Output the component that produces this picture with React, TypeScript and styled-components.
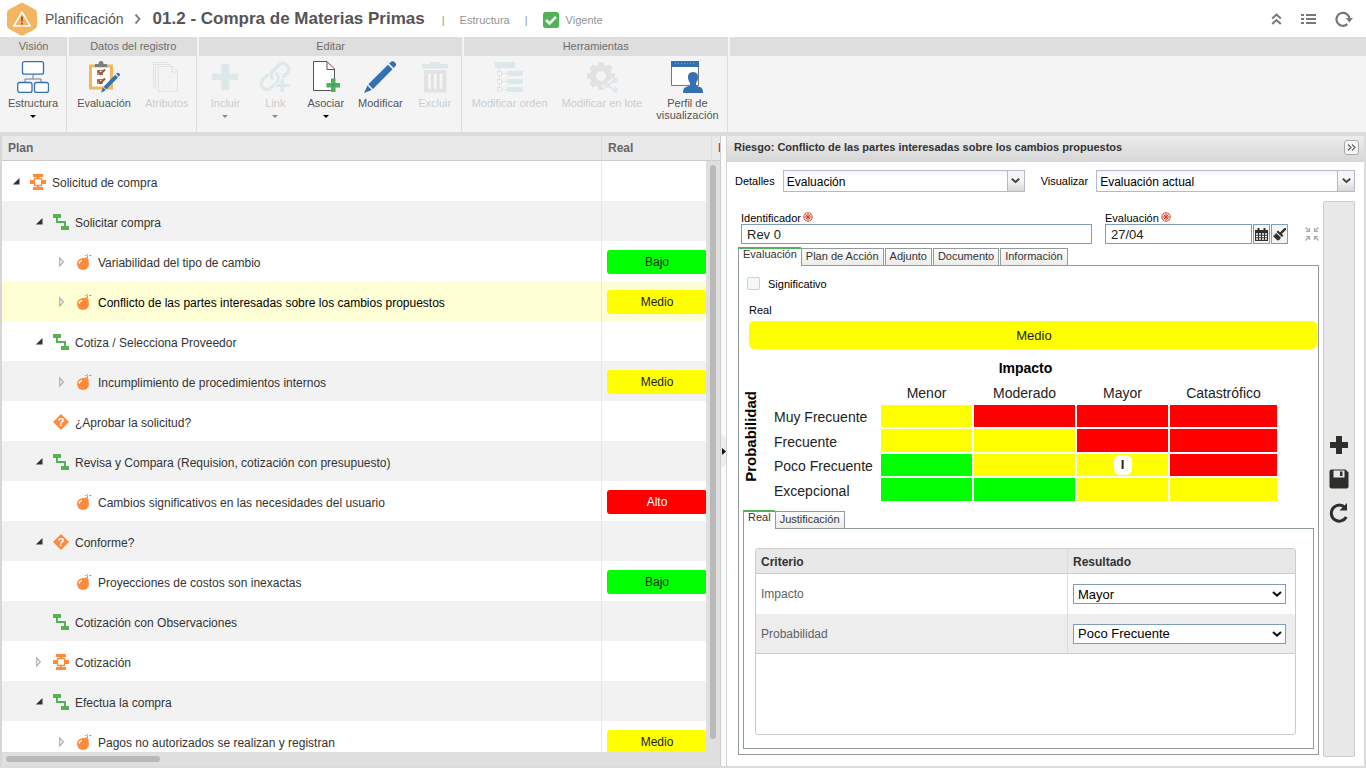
import React, { ReactNode } from 'react';
import styled, { createGlobalStyle, css } from 'styled-components';

const GlobalStyle = createGlobalStyle`
  *, *::before, *::after { box-sizing: border-box; }
  body {
    margin: 0;
    font-family: "Liberation Sans", Arial, sans-serif;
    font-size: 12px;
    color: #333;
    background: #fff;
  }
  button, input, select { font-family: inherit; margin: 0; }
  button { padding: 0; border: 0; background: none; color: inherit; }
  svg { display: block; flex: none; }
`;

const BLUE = '#3470b2';
const ORANGE = '#ff8a3c';
const GREEN = '#57b257';
const PALE = '#dce8ea';
const PALE_GREY = '#e2e2e2';

/* ---------- page ---------- */

const Page = styled.div`
  display: flex;
  flex-direction: column;
  height: 100vh;
  overflow: hidden;
`;

const TopBar = styled.header`
  display: flex;
  align-items: center;
  height: 37px;
  padding: 0 13px 0 6px;
  flex: none;
`;

const Crumb = styled.a`
  margin-left: 7px;
  font-size: 14px;
  color: #555;
  text-decoration: none;
`;

const Title = styled.h1`
  margin: 0 0 0 12px;
  font-size: 17px;
  line-height: 20px;
  color: #555558;
  white-space: nowrap;
`;

const Meta = styled.div`
  display: flex;
  align-items: center;
  gap: 15px;
  margin-left: 17px;
  padding-top: 2px;
  font-size: 11px;
  color: #939696;
`;

const Status = styled.span`
  display: flex;
  align-items: center;
  gap: 7px;
`;

const TopActions = styled.div`
  display: flex;
  align-items: center;
  gap: 19px;
  margin-left: auto;
`;

/* ---------- ribbon ---------- */

const Ribbon = styled.nav`
  display: flex;
  gap: 2px;
  flex: none;
  height: 99px;
  background: #f4f4f4;
  border-bottom: 4px solid #dcdcdc;
`;

const Group = styled.section<{ $fill?: boolean }>`
  display: flex;
  flex-direction: column;
  flex: ${(p) => (p.$fill ? '1' : 'none')};
`;

const GroupTitle = styled.h2`
  margin: 0;
  height: 19px;
  font-size: 11px;
  line-height: 19px;
  font-weight: normal;
  text-align: center;
  color: #6c6c6c;
  background: #dedede;
`;

const GroupBody = styled.div`
  display: flex;
  flex: 1;
  padding: 5px 1px 0;
  border-right: 1px solid #dedede;
`;

const Tool = styled.button`
  display: flex;
  flex-direction: column;
  align-items: center;
  min-width: 50px;
  padding: 0 7px;
  font-size: 11px;
  line-height: 12px;
  white-space: pre-line;
  color: #555;
  &:disabled { color: #cdcdcd; }
`;

const ToolLabel = styled.span`
  margin-top: 4px;
`;

const Caret = styled.span<{ $dim?: boolean }>`
  margin-top: 6px;
  border: 3px solid transparent;
  border-top-color: ${(p) => (p.$dim ? '#8a8a8a' : '#000')};
  border-bottom: 0;
`;

/* ---------- workspace ---------- */

const Workspace = styled.main`
  display: grid;
  grid-template-columns: minmax(0, 721fr) 5px minmax(0, 640fr);
  flex: 1;
  min-height: 0;
  border-bottom: 2px solid #dcdcdc;
`;

const TreePane = styled.section`
  display: flex;
  flex-direction: column;
  min-width: 0;
  min-height: 0;
  border-left: 2px solid #d6d6d6;
  border-right: 1px solid #ccc;
`;

const TreeView = styled.div`
  position: relative;
  flex: 1;
  min-height: 0;
  overflow: hidden;
`;

const TreeTable = styled.table`
  width: 100%;
  table-layout: fixed;
  border-collapse: separate;
  border-spacing: 0;
`;

const TreeHead = styled.th`
  height: 25px;
  padding: 0 6px;
  overflow: hidden;
  white-space: nowrap;
  font-size: 12px;
  text-align: left;
  color: #666;
  background: #e9e9e9;
  border-right: 1px solid #dcdcdc;
  border-bottom: 1px solid #ccc;
  &:last-child { border-right: 0; }
`;

const TreeRow = styled.tr<{ $selected?: boolean }>`
  height: 40px;
  background: #fff;
  &:nth-child(even) { background: #f2f2f2; }
  ${(p) =>
    p.$selected &&
    css`
      && { background: #ffffd5; color: #000; }
    `}
`;

const TreeCell = styled.td`
  height: 40px;
  padding: 0;
  border-right: 1px solid #e6e6e6;
`;

const BadgeCell = styled.td`
  height: 40px;
  padding: 2px 5px 0;
`;

const Node = styled.div<{ $level: number }>`
  display: flex;
  align-items: center;
  height: 40px;
  padding-left: ${(p) => 10 + p.$level * 23}px;
  padding-top: 2px;
  white-space: nowrap;
`;

const NodeText = styled.span`
  padding-top: 2px;
`;

const Toggle = styled.button`
  width: 10px;
  height: 16px;
  margin-right: 8px;
`;

const NodeIcon = styled.span`
  width: 16px;
  height: 16px;
  margin-right: 6px;
`;

const levelColors: Record<string, string> = { Bajo: '#0f0', Medio: '#ff0', Alto: '#f00' };

const Badge = styled.div<{ $level: string }>`
  width: 100px;
  height: 24px;
  line-height: 24px;
  border-radius: 3px;
  text-align: center;
  color: ${(p) => (p.$level === 'Alto' ? '#fff' : '#222')};
  background: ${(p) => levelColors[p.$level]};
`;

const VScroll = styled.div`
  position: absolute;
  top: 25px;
  right: 0;
  bottom: 0;
  width: 14px;
  padding: 4px 4px 13px;
  background: #dfdfdf;
`;

const HScroll = styled.div`
  flex: none;
  height: 14px;
  padding: 4px;
  background: #dfdfdf;
`;

const Thumb = styled.div<{ $width: string; $height: string }>`
  width: ${(p) => p.$width};
  height: ${(p) => p.$height};
  border-radius: 3px;
  background: #b9b9b9;
`;

const Splitter = styled.div`
  display: flex;
  align-items: center;
  justify-content: flex-end;
  background: #fafafa;
`;

const SplitHandle = styled.button`
  display: flex;
  align-items: center;
  justify-content: flex-end;
  width: 5px;
  height: 35px;
  background: #ededed;
  clip-path: polygon(0 0, 100% 4px, 100% 31px, 0 100%);
`;

/* ---------- detail pane ---------- */

const DetailPane = styled.section`
  display: flex;
  flex-direction: column;
  min-width: 0;
  min-height: 0;
  border-left: 1px solid #d2d2d2;
  border-right: 2px solid #dcdcdc;
`;

const DetailHead = styled.header`
  display: flex;
  align-items: center;
  justify-content: space-between;
  flex: none;
  height: 26px;
  padding: 0 5px 4px 7px;
  background: linear-gradient(#ececec, #d6d6d6);
`;

const DetailTitle = styled.h2`
  margin: 0;
  font-size: 11px;
  color: #333;
  white-space: nowrap;
`;

const CollapseButton = styled.button`
  display: flex;
  align-items: center;
  justify-content: center;
  width: 15px;
  height: 15px;
  border: 1px solid #aaa;
  border-radius: 3px;
  background: #f6f6f6;
`;

const Filters = styled.div`
  display: flex;
  align-items: center;
  flex: none;
  padding: 8px 9px 9px 8px;
  font-size: 11px;
  color: #000;
`;

const FilterLabel = styled.label`
  margin-right: 8px;
`;

const Combo = styled.span<{ $grow: number }>`
  position: relative;
  display: flex;
  flex: ${(p) => p.$grow} 1 0;
  margin-right: 16px;
  &:last-child { margin-right: 0; }
`;

const ComboSelect = styled.select`
  appearance: none;
  width: 100%;
  height: 22px;
  padding: 1px 20px 0 3px;
  font-size: 12px;
  color: #000;
  border: 1px solid #b5b8c8;
  border-radius: 0;
  background: linear-gradient(#f3f3f3, #fff 6px);
`;

const ComboArrow = styled.span`
  position: absolute;
  top: 1px;
  right: 1px;
  display: flex;
  align-items: center;
  justify-content: center;
  width: 17px;
  height: 20px;
  border-left: 1px solid #b5b8c8;
  background: linear-gradient(#f5f5f5 0 45%, #d8d8d8);
  pointer-events: none;
`;

const DetailBody = styled.div`
  display: flex;
  flex: 1;
  min-height: 0;
  gap: 4px;
  padding: 0 9px 9px 11px;
`;

const Form = styled.form`
  display: flex;
  flex-direction: column;
  flex: 1;
  min-width: 0;
  padding: 10px 0 2px;
`;

const Fields = styled.div`
  display: flex;
  align-items: flex-end;
  padding-left: 3px;
  margin-bottom: 3px;
`;

const Field = styled.div<{ $grow?: boolean }>`
  flex: ${(p) => (p.$grow ? '1' : 'none')};
  margin-right: ${(p) => (p.$grow ? 13 : 17)}px;
`;

const FieldLabel = styled.label`
  display: flex;
  align-items: center;
  gap: 2px;
  height: 13px;
  font-size: 11px;
  color: #000;
`;

const InputRow = styled.div`
  display: flex;
  gap: 1px;
`;

const TextInput = styled.input<{ $width?: string }>`
  width: ${(p) => p.$width ?? '100%'};
  height: 20px;
  padding: 0 5px;
  font-size: 13px;
  color: #222;
  border: 1px solid #7f9db9;
`;

const IconButton = styled.button`
  display: flex;
  align-items: center;
  justify-content: center;
  width: 17px;
  height: 20px;
  border: 1px solid #7f9db9;
  background: #f4f4f4;
`;

const ShrinkButton = styled.button`
  height: 20px;
  width: 14px;
`;

const Tabs = styled.div`
  display: flex;
  align-items: flex-end;
  flex: none;
  height: 18px;
`;

const Tab = styled.button<{ $active?: boolean }>`
  height: 17px;
  padding: 0 4px 2px;
  margin-right: 1px;
  font-size: 11px;
  line-height: 14px;
  color: #333;
  border: 1px solid #919b9c;
  border-bottom: 0;
  background: linear-gradient(#fdfdfd, #ececea);
  ${(p) =>
    p.$active &&
    css`
      position: relative;
      height: 19px;
      margin: 0 0 -1px;
      padding-bottom: 7px;
      line-height: 10px;
      border-top: 2px solid ${GREEN};
      border-right: 0;
      background: #fff;
    `}
`;

const OuterPanel = styled.div`
  display: flex;
  flex-direction: column;
  flex: 1;
  min-height: 0;
  padding: 10px 4px 5px;
  border: 1px solid #919b9c;
`;

const CheckLine = styled.div`
  display: flex;
  align-items: center;
  gap: 8px;
  height: 15px;
  padding-left: 4px;
  font-size: 11px;
  color: #000;
`;

const Checkbox = styled.input`
  appearance: none;
  width: 13px;
  height: 13px;
  margin: 0;
  border: 1px solid #cfd0d0;
  border-radius: 2px;
  background: #f6f8f8;
`;

const ResultTitle = styled.div`
  margin: 12px 0 4px 6px;
  font-size: 11px;
  line-height: 14px;
  color: #000;
`;

const ResultBar = styled.div`
  flex: none;
  height: 28px;
  margin: 0 -3px 0 6px;
  padding-left: 2px;
  border-radius: 5px;
  font-size: 13px;
  line-height: 29px;
  text-align: center;
  color: #222;
  background: #ff0;
`;

const MatrixArea = styled.div`
  display: flex;
  align-items: flex-end;
  padding: 8px 0 7px;
  color: #000;
`;

const AxisTitle = styled.div`
  width: 16px;
  margin: 0 13px 21px 0;
  font-size: 15px;
  line-height: 16px;
  font-weight: bold;
  writing-mode: vertical-rl;
  transform: rotate(180deg);
`;

const MatrixTable = styled.table`
  border-collapse: separate;
  border-spacing: 2px;
  table-layout: fixed;
  width: 507px;
  font-size: 14px;
  color: #222;
  caption { height: 22px; line-height: 22px; font-weight: bold; color: #000; }
  th { padding: 2px 0 0; font-weight: normal; line-height: 20px; white-space: nowrap; }
  tbody th { text-align: left; }
  tbody th, td { height: 22px; }
  tr:nth-child(even) > td { height: 23px; }
`;

const Risk = styled.td<{ $level: string }>`
  padding: 0;
  background: ${(p) => levelColors[p.$level]};
`;

const Marker = styled.span`
  display: block;
  width: 18px;
  height: 20px;
  margin: 0 auto;
  border-radius: 6px;
  font-size: 13px;
  line-height: 20px;
  font-weight: bold;
  text-align: center;
  color: #222;
  background: #fff;
`;

const InnerPanel = styled.div`
  display: flex;
  flex: 1;
  min-height: 0;
  padding: 19px 17px 13px 11px;
  border: 1px solid #919b9c;
`;

const CriteriaBox = styled.div`
  flex: 1;
  border: 1px solid #ccc;
  border-radius: 3px;
  overflow: hidden;
`;

const CriteriaTable = styled.table`
  width: 100%;
  table-layout: fixed;
  border-collapse: separate;
  border-spacing: 0;
  th, td { padding: 0 5px; text-align: left; border-left: 1px solid #dcdcdc; }
  th:first-child, td:first-child { border-left: 0; }
  th { height: 25px; padding-top: 1px; font-size: 12px; color: #333; background: #e8e8e8; border-bottom: 1px solid #ccc; }
  td { height: 40px; color: #5e6262; }
  tr:nth-child(even) td { background: #ededed; border-bottom: 1px solid #ccc; }
`;

const CriteriaSelect = styled.span`
  position: relative;
  display: block;
  margin-right: 4px;
  select {
    appearance: none;
    display: block;
    width: 100%;
    height: 20px;
    padding: 0 4px;
    font-size: 13px;
    color: #000;
    border: 1px solid #7f9db9;
    border-radius: 0;
    background: #fff;
  }
  svg { position: absolute; right: 4px; top: 7px; pointer-events: none; }
`;

const SideBar = styled.aside`
  display: flex;
  flex-direction: column;
  align-items: center;
  justify-content: center;
  gap: 14px;
  width: 32px;
  flex: none;
  background: #e8e8e8;
  border: 1px solid #ccc;
  border-radius: 2px;
`;

/* ---------- icons ---------- */

const Svg = ({ w = 32, h = 32, children }: { w?: number; h?: number; children: ReactNode }) => (
  <svg width={w} height={h} viewBox={`0 0 ${w} ${h}`} fill="none" aria-hidden="true">
    {children}
  </svg>
);

const LogoIcon = () => (
  <Svg w={32} h={34}>
    <path d="M14 1.4Q16 .2 18 1.4L29 7.6Q31 8.800 31 11V23.500Q31 25.700 29 27L18 33Q16 34 14 33L3 27Q1 25.700 1 23.500V11Q1 8.800 3 7.600Z" fill="#f3b562" />
    <path d="M16 10L24.200 24H7.800Z" stroke="#fff" strokeWidth="1.500" strokeLinejoin="round" />
    <path d="M16 14.500V19.500M16 20.800V22.600" stroke="#a5522c" strokeWidth="1.800" />
  </Svg>
);

const StructureIcon = () => (
  <Svg>
    <path d="M16 14V18M8 21V18H24V21" stroke="#7b7b7b" />
    <g fill="#fff" stroke={BLUE} strokeWidth="1.300">
      <rect x="5.500" y=".7" width="21" height="12.500" rx="2" />
      <rect x=".7" y="21.500" width="14.300" height="10" rx="2" />
      <rect x="17.500" y="21.500" width="14" height="10" rx="2" />
    </g>
  </Svg>
);

const EvaluationIcon = () => (
  <Svg>
    <rect x="2.500" y="5" width="21" height="22" fill="#fff" stroke="#f2b660" strokeWidth="3" />
    <path d="M7 6V3H10.500Q10.500 0 13 0T15.500 3H19V6Z" fill="#7d7d7d" />
    <g stroke="#8a8a8a">
      <rect x="9.500" y="9.500" width="5" height="4" />
      <rect x="9.500" y="18.500" width="5" height="4" />
    </g>
    <path d="M10 10L12.500 13L17 8.500M10 19L12.500 22L17 17.500" stroke="#a8511f" strokeWidth="2" />
    <path d="M27.200 13.800L30 16.400L18.500 28.300L15.600 25.700Z" fill={BLUE} />
    <path d="M28.200 12.800Q29.700 11 31.200 12.300T31.200 15.300L30.700 15.800ZM14.900 26.500L17.800 29.200L13 31.700Z" fill={BLUE} />
  </Svg>
);

const PagesIcon = () => (
  <Svg>
    <g stroke="#e0e3e3" strokeWidth="1.100" fill="#f4f4f4">
      <path d="M2.500 26V1.500H18" />
      <path d="M4.500 28V3.500H20" />
      <path d="M7.500 5.500H21L26.500 11V30.500H7.500Z" />
      <path d="M21 5.500V11H26.500" />
    </g>
    <path d="M11 14H23M11 17H23M11 20H23M11 23H23M11 26H23" stroke="#ebeeee" strokeDasharray="1 1" />
  </Svg>
);

const AddIcon = () => (
  <Svg>
    <path d="M12.500 3H20.500V12.500H29V19H20.500V29H12.500V19H3V12.500H12.500Z" fill={PALE} />
  </Svg>
);

const ChainIcon = () => (
  <Svg>
    <g stroke={PALE} strokeWidth="3.200" strokeLinecap="round">
      <path d="M13.500 17.500Q10.500 13.500 14 10L20 4Q24 .8 27.800 4T28 12.500L24 16.500" />
      <path d="M17.500 13Q21.500 17 18 21L12 27Q8 30 4.200 27T4 18.500L8 14.500" />
    </g>
    <path d="M21 17.500H25.500V22.500H31V26.500H25.500V31.500H21V26.500H16V22.500H21Z" fill={PALE} stroke="#f4f4f4" />
  </Svg>
);

const AssociateIcon = () => (
  <Svg>
    <path d="M3.500 .5H17L24.500 8V29.500H3.500Z" fill="#fff" stroke="#555" />
    <path d="M17 1V8.500H24.500" stroke="#555" />
    <path d="M21 17.500H25.500V22H30V26.500H25.500V31H21V26.500H16.500V22H21Z" fill="#50b054" />
    <circle cx="23.200" cy="24.200" r="1.500" fill="#3f8fa8" />
  </Svg>
);

const PencilIcon = () => (
  <Svg>
    <path d="M24 3.800L28.500 8.300L9 28L4.300 23.200Z" fill={BLUE} />
    <path d="M25.200 2.500L27 .8Q29 -.5 31 1.500T31.300 5.300L29.600 7ZM3.400 24.500L7.800 29L0 32Z" fill={BLUE} />
  </Svg>
);

const TrashIcon = () => (
  <Svg>
    <path d="M3 3H11V1H21V3H29V7.500H3Z" fill={PALE} />
    <path d="M5 9H27.500V31.500H5Z" fill={PALE_GREY} />
    <path d="M10.500 12.500V28M16.200 12.500V28M22 12.500V28" stroke="#f6f6f6" strokeWidth="2.600" />
  </Svg>
);

const OrderIcon = () => (
  <Svg>
    <path d="M-1 1H19V7H-1ZM11 10H27V15H11ZM11 18H27V23H11ZM11 26H27V31H11Z" transform="translate(2 0)" fill={PALE} />
    <path d="M5.500 7V11M5.500 14V19M5.500 22V27M7 12.500H13M7 20.500H13M7 28.500H13" stroke={PALE_GREY} />
    <path d="M3.500 10.500H7.500V14.500H3.500ZM3.500 18.500H7.500V22.500H3.500ZM3.500 26.500H7.500V30.500H3.500Z" stroke={PALE_GREY} />
  </Svg>
);

const GearIcon = () => (
  <Svg>
    <g stroke={PALE_GREY}>
      <circle cx="15" cy="15" r="8" strokeWidth="6" />
      <path d="M15 1V5M15 25V29M1 15H5M25 15H29M5.100 5.100L8 8M22 22L25 25M5.100 24.900L8 22M22 8L24.900 5.100" strokeWidth="5.500" />
    </g>
    <path d="M29 19L21 25L29 29.500" stroke="#f4f4f4" strokeWidth="6" />
    <path d="M29 19.500L21 24.500L29 29" stroke={PALE} strokeWidth="1.800" />
    <g fill={PALE}>
      <circle cx="29" cy="19.500" r="2.600" />
      <circle cx="21" cy="24.500" r="2.800" />
      <circle cx="29" cy="29" r="2.600" />
    </g>
  </Svg>
);

const ProfileIcon = () => (
  <Svg>
    <path d="M.5 5V24.500H27.500V5" fill="#fff" stroke="#777" />
    <path d="M0 0H28V6H0Z" fill={BLUE} />
    <path d="M4 2.500H25" stroke="#74a0d0" strokeDasharray="1 2" />
    <path d="M22 11Q27.500 11 27 17Q26.500 20.500 25 22V24.500L30 26.500Q32 27.500 32 32H12Q12 27.500 14 26.500L19 24.500V22Q17.500 20.500 17 17Q16.500 11 22 11Z" fill={BLUE} />
  </Svg>
);

const ProcessIcon = () => (
  <Svg w={16} h={16}>
    <path d="M3 0H13V3H9V4H7V3H3ZM3 13H7V11H9V13H13V16H3ZM0 6H5V10H0ZM11 6H16V10H11Z" fill={ORANGE} />
    <path d="M4.500 6V4.500H11.500V6M4.500 10V11.500H11.500V10" stroke={ORANGE} strokeWidth="1.300" />
  </Svg>
);

const ActivityIcon = () => (
  <Svg w={16} h={16}>
    <path d="M0 0H8V4H5V7H13V12H16V16H8V12H11V9H3V4H0Z" fill={GREEN} />
  </Svg>
);

const BombIcon = () => (
  <Svg w={16} h={16}>
    <circle cx="7" cy="10" r="6" fill={ORANGE} />
    <path d="M8 4.500L10 3L13 6L11.500 8.500Z" fill={ORANGE} />
    <path d="M11.500 4.500V1.500M9 1.500H10.500M13 1.500H15.500M11.500 0V1" stroke={ORANGE} />
    <path d="M3 9.500Q3.500 7 6 6.500" stroke="#fff" strokeWidth="1.300" />
  </Svg>
);

const DecisionIcon = () => (
  <Svg w={16} h={16}>
    <path d="M8 0L16 8L8 16L0 8Z" fill={ORANGE} />
    <text x="8" y="12" textAnchor="middle" fontSize="11" fontWeight="bold" fill="#fff">?</text>
  </Svg>
);

const RequiredIcon = () => (
  <Svg w={11} h={11}>
    <circle cx="5" cy="5" r="4.300" stroke="#d8593a" fill="#fbe3dc" />
    <path d="M5 1.500V8.500M1.500 5H8.500M2.800 2.800L7.200 7.200M7.200 2.800L2.800 7.200" stroke="#d23c28" />
  </Svg>
);

const ChevronDown = () => (
  <Svg w={10} h={6}>
    <path d="M1 1L5 4.600L9 1" stroke="#111" strokeWidth="2" />
  </Svg>
);

const ComboChevron = () => (
  <Svg w={9} h={6}>
    <path d="M.8 .8L4.500 4L8.200 .8" stroke="#444" strokeWidth="2" />
  </Svg>
);

/* ---------- data ---------- */

type ToolItem = { label: string; icon: () => ReactNode; disabled?: boolean; menu?: boolean };

const groups: { title: string; tools: ToolItem[] }[] = [
  { title: 'Visión', tools: [{ label: 'Estructura', icon: StructureIcon, menu: true }] },
  {
    title: 'Datos del registro',
    tools: [
      { label: 'Evaluación', icon: EvaluationIcon },
      { label: 'Atributos', icon: PagesIcon, disabled: true },
    ],
  },
  {
    title: 'Editar',
    tools: [
      { label: 'Incluir', icon: AddIcon, disabled: true, menu: true },
      { label: 'Link', icon: ChainIcon, disabled: true, menu: true },
      { label: 'Asociar', icon: AssociateIcon, menu: true },
      { label: 'Modificar', icon: PencilIcon },
      { label: 'Excluir', icon: TrashIcon, disabled: true },
    ],
  },
  {
    title: 'Herramientas',
    tools: [
      { label: 'Modificar orden', icon: OrderIcon, disabled: true },
      { label: 'Modificar en lote', icon: GearIcon, disabled: true },
      { label: 'Perfil de\nvisualización', icon: ProfileIcon },
    ],
  },
];

const nodeIcons = { process: ProcessIcon, activity: ActivityIcon, bomb: BombIcon, decision: DecisionIcon };

type TreeNode = {
  text: string;
  level: number;
  icon: keyof typeof nodeIcons;
  state?: 'open' | 'closed';
  badge?: string;
  selected?: boolean;
};

const nodes: TreeNode[] = [
  { text: 'Solicitud de compra', level: 0, icon: 'process', state: 'open' },
  { text: 'Solicitar compra', level: 1, icon: 'activity', state: 'open' },
  { text: 'Variabilidad del tipo de cambio', level: 2, icon: 'bomb', state: 'closed', badge: 'Bajo' },
  { text: 'Conflicto de las partes interesadas sobre los cambios propuestos', level: 2, icon: 'bomb', state: 'closed', badge: 'Medio', selected: true },
  { text: 'Cotiza / Selecciona Proveedor', level: 1, icon: 'activity', state: 'open' },
  { text: 'Incumplimiento de procedimientos internos', level: 2, icon: 'bomb', state: 'closed', badge: 'Medio' },
  { text: '¿Aprobar la solicitud?', level: 1, icon: 'decision' },
  { text: 'Revisa y Compara (Requision, cotización con presupuesto)', level: 1, icon: 'activity', state: 'open' },
  { text: 'Cambios significativos en las necesidades del usuario', level: 2, icon: 'bomb', badge: 'Alto' },
  { text: 'Conforme?', level: 1, icon: 'decision', state: 'open' },
  { text: 'Proyecciones de costos son inexactas', level: 2, icon: 'bomb', badge: 'Bajo' },
  { text: 'Cotización con Observaciones', level: 1, icon: 'activity' },
  { text: 'Cotización', level: 1, icon: 'process', state: 'closed' },
  { text: 'Efectua la compra', level: 1, icon: 'activity', state: 'open' },
  { text: 'Pagos no autorizados se realizan y registran', level: 2, icon: 'bomb', state: 'closed', badge: 'Medio' },
];

const impacts = ['Menor', 'Moderado', 'Mayor', 'Catastrófico'];
const matrix: [string, string[]][] = [
  ['Muy Frecuente', ['Medio', 'Alto', 'Alto', 'Alto']],
  ['Frecuente', ['Medio', 'Medio', 'Alto', 'Alto']],
  ['Poco Frecuente', ['Bajo', 'Medio', 'Medio', 'Alto']],
  ['Excepcional', ['Bajo', 'Bajo', 'Medio', 'Medio']],
];

const criteria = [
  { id: 'impacto', name: 'Impacto', value: 'Mayor' },
  { id: 'probabilidad', name: 'Probabilidad', value: 'Poco Frecuente' },
];

/* ---------- composition ---------- */

const Header = () => (
  <TopBar>
    <LogoIcon />
    <Crumb href="#planificacion">Planificación</Crumb>
    <Svg w={17} h={12}>
      <path d="M11.500 1.500L15.500 6L11.500 10.500" stroke="#888" strokeWidth="2" />
    </Svg>
    <Title>01.2 - Compra de Materias Primas</Title>
    <Meta>
      <span>|</span>
      <span>Estructura</span>
      <span>|</span>
      <Status>
        <Svg w={16} h={16}>
          <rect width="16" height="16" rx="2.500" fill="#51b355" />
          <path d="M3 8L6.500 11.500L13 4.800" stroke="#fff" strokeWidth="2.600" />
        </Svg>
        Vigente
      </Status>
    </Meta>
    <TopActions>
      <button type="button" aria-label="Contraer">
        <Svg w={11} h={14}>
          <path d="M1.200 6.500L5.500 2.500L9.800 6.500M1.200 12L5.500 8L9.800 12" stroke="#777" strokeWidth="2" />
        </Svg>
      </button>
      <button type="button" aria-label="Lista">
        <Svg w={15} h={12}>
          <path d="M0 2H3M5 2H15M0 6H3M5 6H15M0 10H3M5 10H15" stroke="#777" strokeWidth="2" />
        </Svg>
      </button>
      <button type="button" aria-label="Actualizar">
        <Svg w={18} h={16}>
          <path d="M12.300 13.200A6.500 6.500 0 1 1 14.500 8" stroke="#777" strokeWidth="2.200" />
          <path d="M10.800 7H18L14.400 11.500Z" fill="#777" />
        </Svg>
      </button>
    </TopActions>
  </TopBar>
);

const Toolbar = () => (
  <Ribbon>
    {groups.map((group) => (
      <Group key={group.title}>
        <GroupTitle>{group.title}</GroupTitle>
        <GroupBody>
          {group.tools.map(({ label, icon: Icon, disabled, menu }) => (
            <Tool key={label} type="button" disabled={disabled}>
              <Icon />
              <ToolLabel>{label}</ToolLabel>
              {menu && <Caret $dim={disabled} />}
            </Tool>
          ))}
        </GroupBody>
      </Group>
    ))}
    <Group $fill>
      <GroupTitle />
    </Group>
  </Ribbon>
);

const ToggleIcon = ({ state }: { state: 'open' | 'closed' }) => (
  <Svg w={10} h={16}>
    {state === 'open' ? (
      <path d="M7.500 4V10.500H.8Z" fill="#333" />
    ) : (
      <path d="M1.700 4L5.300 8L1.700 12Z" stroke="#b0b0b4" strokeWidth="1.200" />
    )}
  </Svg>
);

const Tree = () => (
  <TreePane>
    <TreeView>
      <TreeTable>
        <colgroup>
          <col />
          <col width="110" />
          <col width="8" />
        </colgroup>
        <thead>
          <tr>
            <TreeHead>Plan</TreeHead>
            <TreeHead>Real</TreeHead>
            <TreeHead>I</TreeHead>
          </tr>
        </thead>
        <tbody>
          {nodes.map((node) => {
            const Icon = nodeIcons[node.icon];
            return (
              <TreeRow key={node.text} $selected={node.selected}>
                <TreeCell>
                  <Node $level={node.level}>
                    {node.state ? (
                      <Toggle type="button" aria-label={node.state === 'open' ? 'Contraer' : 'Expandir'}>
                        <ToggleIcon state={node.state} />
                      </Toggle>
                    ) : (
                      <Toggle as="span" />
                    )}
                    <NodeIcon>
                      <Icon />
                    </NodeIcon>
                    <NodeText>{node.text}</NodeText>
                  </Node>
                </TreeCell>
                <BadgeCell colSpan={2}>{node.badge && <Badge $level={node.badge}>{node.badge}</Badge>}</BadgeCell>
              </TreeRow>
            );
          })}
        </tbody>
      </TreeTable>
      <VScroll>
        <Thumb $width="6px" $height="100%" />
      </VScroll>
    </TreeView>
    <HScroll>
      <Thumb $width="154px" $height="6px" />
    </HScroll>
  </TreePane>
);

const Matrix = () => (
  <MatrixArea>
    <AxisTitle>Probabilidad</AxisTitle>
    <MatrixTable>
      <caption>Impacto</caption>
      <colgroup>
        <col width="105" />
        <col width="91" />
        <col width="101" />
        <col width="91" />
        <col width="107" />
      </colgroup>
      <thead>
        <tr>
          <td />
          {impacts.map((impact) => (
            <th key={impact} scope="col">{impact}</th>
          ))}
        </tr>
      </thead>
      <tbody>
        {matrix.map(([name, levels], row) => (
          <tr key={name}>
            <th scope="row">{name}</th>
            {levels.map((level, col) => (
              <Risk key={impacts[col]} $level={level}>
                {row === 2 && col === 2 && <Marker>I</Marker>}
              </Risk>
            ))}
          </tr>
        ))}
      </tbody>
    </MatrixTable>
  </MatrixArea>
);

const Criteria = () => (
  <CriteriaBox>
    <CriteriaTable>
      <colgroup>
        <col />
        <col width="228" />
      </colgroup>
      <thead>
        <tr>
          <th>Criterio</th>
          <th>Resultado</th>
        </tr>
      </thead>
      <tbody>
        {criteria.map((item) => (
          <tr key={item.id}>
            <td>
              <label htmlFor={item.id}>{item.name}</label>
            </td>
            <td>
              <CriteriaSelect>
                <select id={item.id} defaultValue={item.value}>
                  <option>{item.value}</option>
                </select>
                <ChevronDown />
              </CriteriaSelect>
            </td>
          </tr>
        ))}
      </tbody>
    </CriteriaTable>
  </CriteriaBox>
);

const Detail = () => (
  <DetailPane>
    <DetailHead>
      <DetailTitle>Riesgo: Conflicto de las partes interesadas sobre los cambios propuestos</DetailTitle>
      <CollapseButton type="button" aria-label="Ocultar panel">
        <Svg w={9} h={7}>
          <path d="M1 .5L4 3.500L1 6.500M5 .5L8 3.500L5 6.500" stroke="#666" strokeWidth="1.200" />
        </Svg>
      </CollapseButton>
    </DetailHead>
    <Filters>
      <FilterLabel htmlFor="detalles">Detalles</FilterLabel>
      <Combo $grow={242}>
        <ComboSelect id="detalles">
          <option>Evaluación</option>
        </ComboSelect>
        <ComboArrow><ComboChevron /></ComboArrow>
      </Combo>
      <FilterLabel htmlFor="visualizar">Visualizar</FilterLabel>
      <Combo $grow={259}>
        <ComboSelect id="visualizar">
          <option>Evaluación actual</option>
        </ComboSelect>
        <ComboArrow><ComboChevron /></ComboArrow>
      </Combo>
    </Filters>
    <DetailBody>
      <Form>
        <Fields>
          <Field $grow>
            <FieldLabel htmlFor="identificador">Identificador<RequiredIcon /></FieldLabel>
            <InputRow>
              <TextInput id="identificador" defaultValue="Rev 0" />
            </InputRow>
          </Field>
          <Field>
            <FieldLabel htmlFor="fecha">Evaluación<RequiredIcon /></FieldLabel>
            <InputRow>
              <TextInput id="fecha" $width="147px" defaultValue="27/04" />
              <IconButton type="button" aria-label="Calendario">
                <Svg w={13} h={13}>
                  <path d="M0 2H13V13H0Z" fill="#30312c" />
                  <path d="M3.500 0V3M9.500 0V3" stroke="#30312c" strokeWidth="2" />
                  <path d="M1 6H12M1 8.500H12M1 11H12" stroke="#f4f4f4" strokeWidth="1.500" strokeDasharray="2 1" />
                </Svg>
              </IconButton>
              <IconButton type="button" aria-label="Limpiar">
                <Svg w={13} h={13}>
                  <path d="M12 1.200L8 5" stroke="#30312c" strokeWidth="2.400" strokeLinecap="round" />
                  <path d="M5 2.500L10.500 7.500L9 9L3.500 4ZM3 5L8 9.500Q7 12 4.500 12.500L0 8Q2 7.500 3 5Z" fill="#30312c" />
                </Svg>
              </IconButton>
            </InputRow>
          </Field>
          <ShrinkButton type="button" aria-label="Reducir">
            <Svg w={14} h={14}>
              <path d="M.5 .5L4 4M1 4.500H4.500V1M13.500 .5L10 4M13 4.500H9.500V1M.5 13.500L4 10M1 9.500H4.500V13M13.500 13.500L10 10M13 9.500H9.500V13" stroke="#aaa" strokeWidth="1.200" />
            </Svg>
          </ShrinkButton>
        </Fields>
        <Tabs role="tablist">
          {['Evaluación', 'Plan de Acción', 'Adjunto', 'Documento', 'Información'].map((tab, i) => (
            <Tab key={tab} type="button" role="tab" aria-selected={i === 0} $active={i === 0}>{tab}</Tab>
          ))}
        </Tabs>
        <OuterPanel>
          <CheckLine>
            <Checkbox id="significativo" type="checkbox" />
            <label htmlFor="significativo">Significativo</label>
          </CheckLine>
          <ResultTitle>Real</ResultTitle>
          <ResultBar>Medio</ResultBar>
          <Matrix />
          <Tabs role="tablist">
            {['Real', 'Justificación'].map((tab, i) => (
              <Tab key={tab} type="button" role="tab" aria-selected={i === 0} $active={i === 0}>{tab}</Tab>
            ))}
          </Tabs>
          <InnerPanel>
            <Criteria />
          </InnerPanel>
        </OuterPanel>
      </Form>
      <SideBar>
        <button type="button" aria-label="Agregar">
          <Svg w={20} h={20}>
            <path d="M7 1H13V7H19V13H13V19H7V13H1V7H7Z" fill="#2e2f2a" />
          </Svg>
        </button>
        <button type="button" aria-label="Guardar">
          <Svg w={20} h={20}>
            <path d="M2.500 .5H16.500L19.500 3.500V17.500Q19.500 19.500 17.500 19.500H2.500Q.5 19.500 .5 17.500V2.500Q.5 .5 2.500 .5Z" fill="#2e2f2a" />
            <path d="M4.500 1.500H15.500V8.500H4.500Z" fill="#e8e8e8" />
            <path d="M11 2.500H13.500V7H11Z" fill="#2e2f2a" />
          </Svg>
        </button>
        <button type="button" aria-label="Recargar">
          <Svg w={20} h={20}>
            <path d="M17.300 14A8 8 0 1 1 16 4.500" stroke="#2e2f2a" strokeWidth="3" />
            <path d="M18 0V7.500H10.500Z" fill="#2e2f2a" />
          </Svg>
        </button>
      </SideBar>
    </DetailBody>
  </DetailPane>
);

export default function App() {
  return (
    <Page>
      <GlobalStyle />
      <Header />
      <Toolbar />
      <Workspace>
        <Tree />
        <Splitter>
          <SplitHandle type="button" aria-label="Mover divisor">
            <Svg w={4} h={7}>
              <path d="M0 0L4 3.500L0 7Z" fill="#111" />
            </Svg>
          </SplitHandle>
        </Splitter>
        <Detail />
      </Workspace>
    </Page>
  );
}
